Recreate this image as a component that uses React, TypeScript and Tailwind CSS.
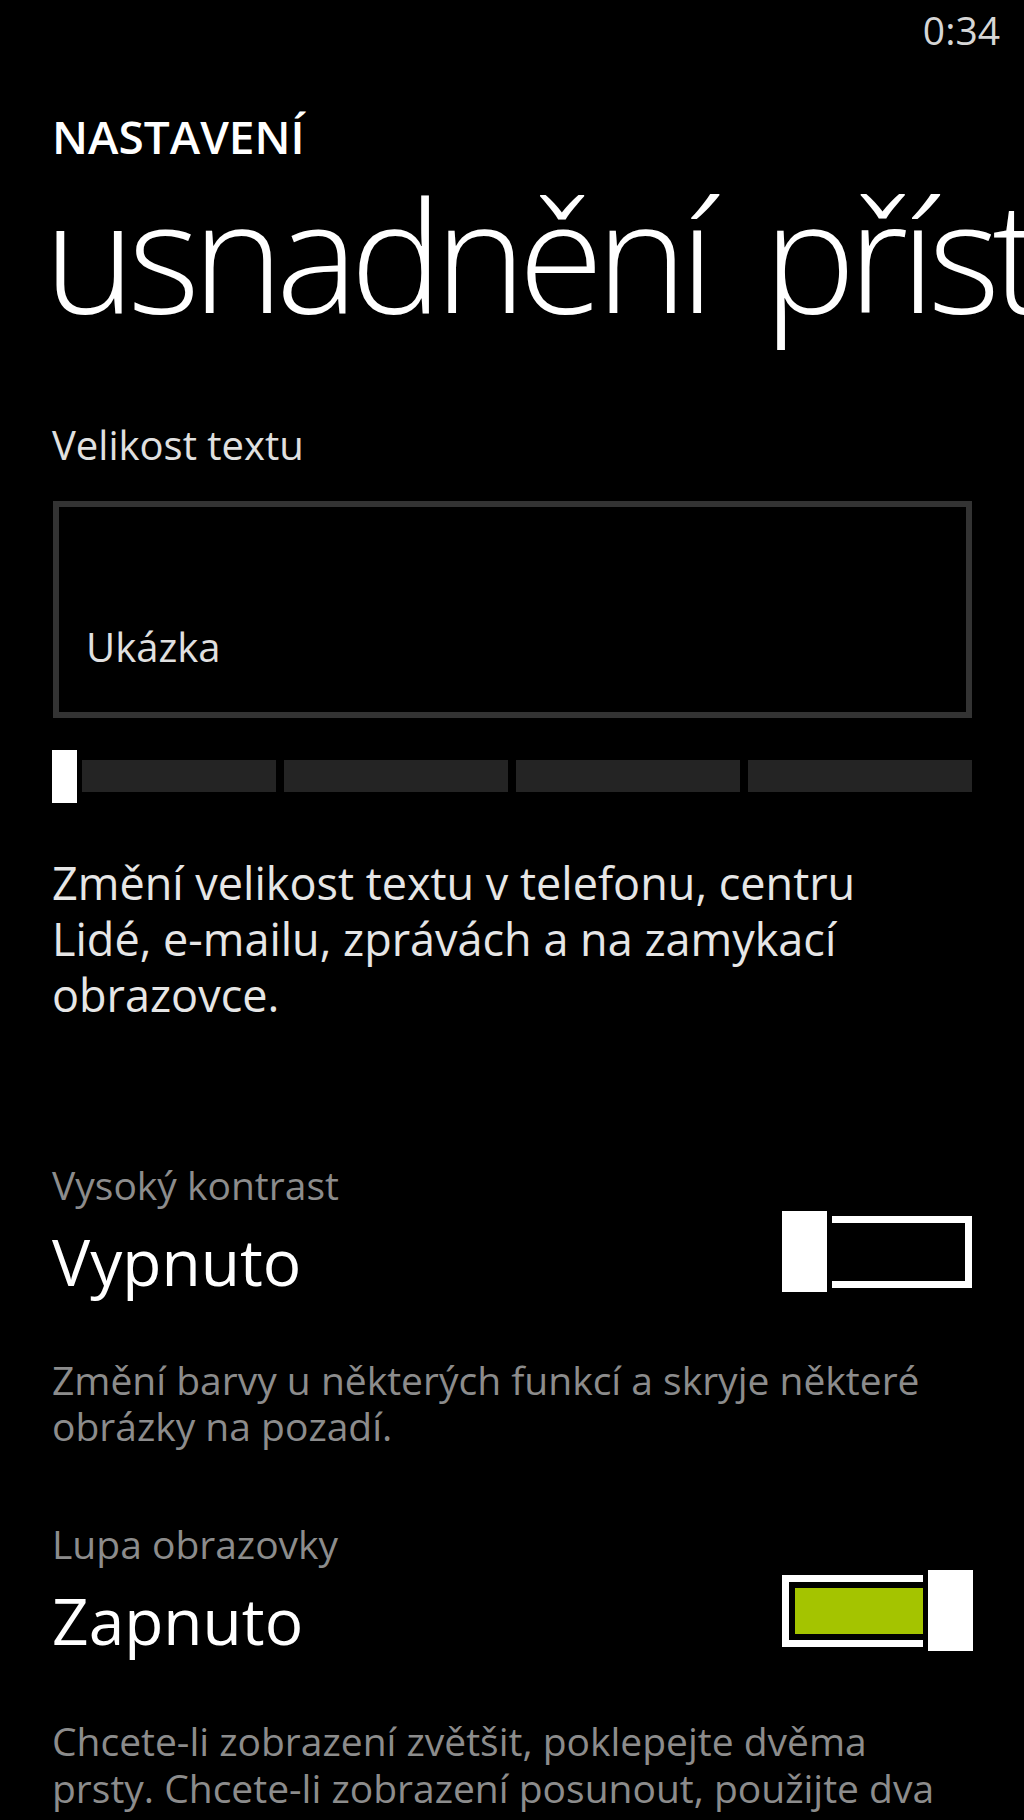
import React from "react";

const FONT = "font-['Open_Sans','Noto_Sans','DejaVu_Sans',sans-serif]";

function Toggle({ on }: { on: boolean }) {
  return (
    <div className="relative w-[190px] h-[81px] flex items-center shrink-0">
      <div className="w-full h-[72px] border-[7px] border-white p-[6px]">
        {on && <div className="w-full h-full bg-[#a4c400]" />}
      </div>
      <div
        className={`absolute top-[-5px] w-[55px] h-[91px] border-[5px] border-black bg-white ${
          on ? "right-[-6px]" : "left-[-5px]"
        }`}
      />
    </div>
  );
}

function SettingRow({ label, value, on }: { label: string; value: string; on: boolean }) {
  return (
    <div>
      <div className="text-[39px] leading-[39px] text-[#8c8c8c]">{label}</div>
      <div className="mt-[7px] flex items-start justify-between">
        <div className="mt-[19px] text-[64px] leading-[64px] text-white">{value}</div>
        <Toggle on={on} />
      </div>
    </div>
  );
}

export default function App() {
  return (
    <div className={`${FONT} bg-black h-[1820px] overflow-hidden text-white`}>
      <div className="flex justify-end pt-[10px] pr-[24px] text-[39px] leading-[39px] text-[#d6d6d6]">0:34</div>

      <div className="px-[52px]">
        <div className="mt-[64px] text-[46px] leading-[46px] font-semibold">NASTAVENÍ</div>
        <div className="mt-[16px] ml-[-8px] text-[155px] leading-[155px] font-light tracking-[-0.05em] [word-spacing:24px] whitespace-nowrap">
          usnadnění přístupnosti
        </div>

        <div className="mt-[95px] text-[40px] leading-[40px] text-[#e0e0e0]">Velikost textu</div>
        <div className="mt-[36px] ml-[1px] h-[217px] border-[6px] border-[#333333] pl-[27px] pt-[120px]">
          <div className="text-[40px] leading-[40px] text-[#e0e0e0]">Ukázka</div>
        </div>

        <div className="relative mt-[32px] h-[53px]">
          <div className="pt-[10px] flex gap-2">
            <div className="flex-1 h-[32px] bg-[#242424]" />
            <div className="flex-1 h-[32px] bg-[#242424]" />
            <div className="flex-1 h-[32px] bg-[#242424]" />
            <div className="flex-1 h-[32px] bg-[#242424]" />
          </div>
          <div className="absolute left-[-5px] top-[-5px] w-[35px] h-[63px] border-[5px] border-black bg-white" />
        </div>

        <p className="mt-[52px] text-[45px] leading-[56px] text-[#e6e6e6] whitespace-nowrap">
          Změní velikost textu v telefonu, centru
          <br />
          Lidé, e-mailu, zprávách a na zamykací
          <br />
          obrazovce.
        </p>

        <div className="mt-[142px]">
          <SettingRow label="Vysoký kontrast" value="Vypnuto" on={false} />
        </div>

        <p className="mt-[63px] text-[39px] leading-[46px] text-[#8c8c8c] whitespace-nowrap">
          Změní barvy u některých funkcí a skryje některé
          <br />
          obrázky na pozadí.
        </p>

        <div className="mt-[75px]">
          <SettingRow label="Lupa obrazovky" value="Zapnuto" on={true} />
        </div>

        <p className="mt-[64px] text-[39px] leading-[47px] text-[#8c8c8c] whitespace-nowrap">
          Chcete-li zobrazení zvětšit, poklepejte dvěma
          <br />
          prsty. Chcete-li zobrazení posunout, použijte dva
          <br />
          prsty a přetáhněte je.
        </p>
      </div>
    </div>
  );
}
